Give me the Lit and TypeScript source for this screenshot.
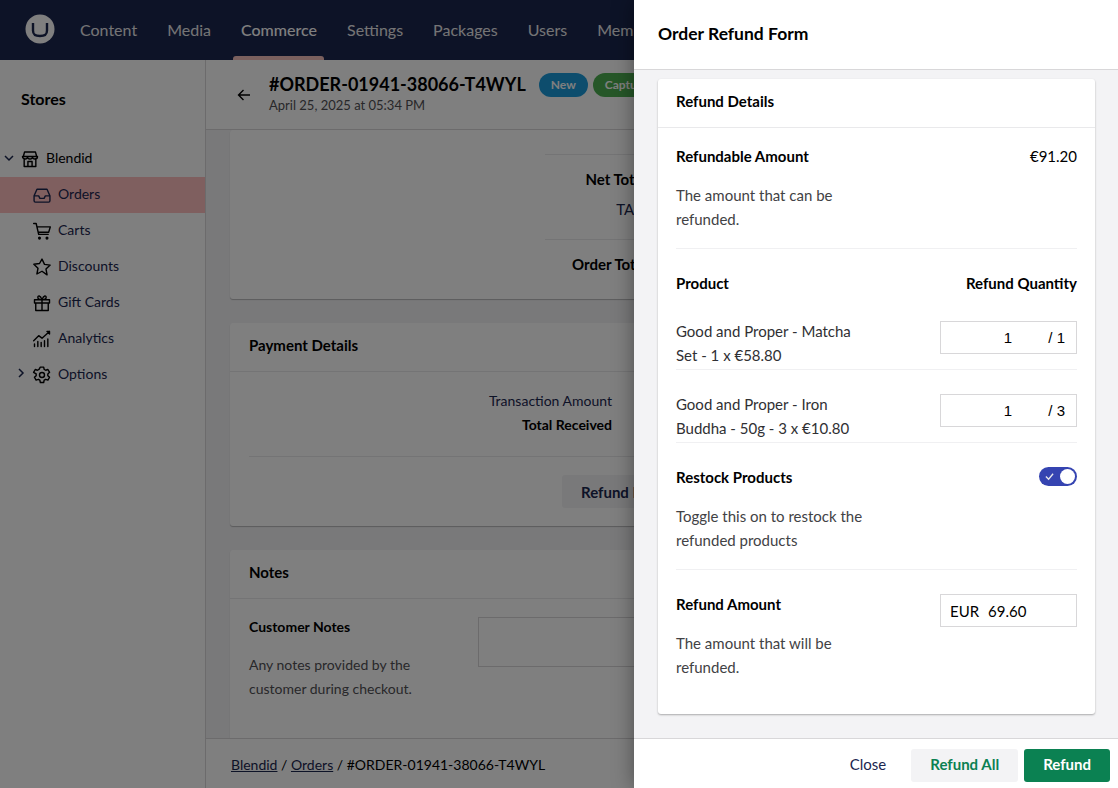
import { LitElement, html, css, svg } from 'lit'
import { customElement } from 'lit/decorators.js'

const nav = ['Content', 'Media', 'Commerce', 'Settings', 'Packages', 'Users', 'Members']

const icons: Record<string, unknown> = {
	store: svg`<path d="M4 9 5.500 3.500h13L20 9M3 9h18a3 3 0 0 1-3 3 3 3 0 0 1-3-1.600A3 3 0 0 1 12 12a3 3 0 0 1-3-1.600A3 3 0 0 1 6 12a3 3 0 0 1-3-3ZM5 12v9h14v-9M9.500 21v-6h5v6"/>`,
	inbox: svg`<path d="M2.500 13 6 5h12l3.500 8v6a1.500 1.500 0 0 1-1.500 1.500H4A1.500 1.500 0 0 1 2.500 19ZM2.500 13H8l1.500 3h5l1.500-3h5.500"/>`,
	cart: svg`<path d="M2 3h3l3 13h11.500M6 7h16l-2 6.500H7.500"/><circle cx="9" cy="20.500" r="1"/><circle cx="18" cy="20.500" r="1"/>`,
	star: svg`<path d="m12 2.500 3 6.300 6.800.9-5 4.800 1.300 6.900L12 17.100 5.900 20.400l1.300-6.900-5-4.800 6.800-.9Z"/>`,
	gift: svg`<path d="M3 8h18v4H3ZM4.500 12v9h15v-9M12 8v13M12 8C9 8 7 6.800 7 5s2.800-3 5 3c2.200-6 5-4.800 5-3s-2 3-5 3Z"/>`,
	chart: svg`<path d="m2 14 6-6 4 3 9-8M18 3h3v3M3 21v-3M7 21v-6M11 21v-5M15 21v-7M19 21v-9"/>`,
	cog: svg`<circle cx="12" cy="12" r="3"/><path d="M10 2.500h4l.6 2.800 1.800 1 2.700-.9 2 3.400-2.100 1.900v2.100l2.100 1.900-2 3.400-2.700-.9-1.800 1-.6 2.800h-4l-.6-2.800-1.800-1-2.700.9-2-3.400 2.100-1.900v-2.100L1.900 8.800l2-3.400 2.700.9 1.800-1Z"/>`,
}

const tree = [
	{ label: 'Orders', icon: 'inbox', active: true },
	{ label: 'Carts', icon: 'cart' },
	{ label: 'Discounts', icon: 'star' },
	{ label: 'Gift Cards', icon: 'gift' },
	{ label: 'Analytics', icon: 'chart' },
	{ label: 'Options', icon: 'cog', caret: true },
]

const icon = (name: string) => html`<svg class="icon" viewBox="0 0 24 24">${icons[name]}</svg>`

@customElement('app-root')
export class AppRoot extends LitElement {
	static styles = css`
		:host {
			display: block;
			width: 1118px;
			height: 788px;
			position: relative;
			overflow: hidden;
			font-family: Lato, "Liberation Sans", sans-serif;
			font-size: 15px;
			line-height: 24px;
			color: #1b264f;
			background: #f3f3f5;
		}

		* {
			box-sizing: border-box;
			margin: 0;
		}

		.topbar {
			height: 60px;
			background: #1b264f;
			display: flex;
			align-items: center;
			padding-left: 25px;
			gap: 30px;
			color: #e9e9eb;
			font-size: 16px;
		}

		.logo {
			width: 30px;
			height: 30px;
			margin-right: -5px;
			margin-top: -3px;
			flex: none;
		}

		.topbar a {
			height: 60px;
			display: flex;
			align-items: center;
			position: relative;
			white-space: nowrap;
		}

		.topbar a.active {
			color: #fff;
			font-weight: 500;
		}

		.topbar a.active::after {
			content: "";
			position: absolute;
			left: -8px;
			right: -7px;
			bottom: 0;
			height: 4px;
			border-radius: 3px 3px 0 0;
			background: #f5c1bc;
		}

		.shell {
			display: flex;
			height: 728px;
		}

		.sidebar {
			width: 206px;
			flex: none;
			background: #fff;
			border-right: 1px solid #d8d7d9;
			padding-top: 27px;
			color: #000;
		}

		.sidebar h3 {
			font-size: 16px;
			font-weight: 700;
			padding-left: 21px;
			line-height: 24px;
			margin-bottom: 30px;
			color: #000;
		}

		.tree-row {
			height: 36px;
			display: flex;
			align-items: center;
			padding: 0 0 2px 32px;
			gap: 6px;
			font-size: 14px;
			position: relative;
			color: #1b264f;
		}

		.tree-row.root {
			padding-left: 20px;
			color: #000;
		}

		.tree-row.active {
			background: #ffbfbf;
		}

		.caret {
			position: absolute;
			width: 10px;
			height: 10px;
			fill: none;
			stroke: #1b264f;
			stroke-width: 1.5;
		}

		.icon {
			width: 20px;
			height: 20px;
			margin-top: 2px;
			flex: none;
			fill: none;
			stroke: #000;
			stroke-width: 1.7;
			stroke-linecap: round;
			stroke-linejoin: round;
		}

		.active .icon {
			stroke: #1b264f;
		}

		.main {
			flex: 1;
			display: flex;
			flex-direction: column;
			min-width: 0;
		}

		.order-head {
			height: 70px;
			flex: none;
			background: #fff;
			border-bottom: 1px solid #d8d7d9;
			display: flex;
			align-items: center;
			padding: 0 0 4px 31px;
			gap: 18px;
		}

		.back {
			width: 14px;
			height: 14px;
			margin-top: 5px;
			fill: none;
			stroke: #000;
			stroke-width: 1.4;
			flex: none;
		}

		.order-title {
			display: flex;
			align-items: center;
			gap: 13px;
			height: 24px;
			white-space: nowrap;
		}

		.order-title strong {
			font-size: 18px;
			font-weight: 700;
			color: #000;
		}

		.order-date {
			font-size: 13px;
			line-height: 18px;
			color: #515054;
		}

		.badges {
			display: flex;
			gap: 5px;
			margin-top: 2px;
		}

		.badge {
			height: 24px;
			border-radius: 12px;
			padding: 0 12px;
			color: #fff;
			font-size: 12px;
			font-weight: 700;
			line-height: 24px;
			background: #1b9bdb;
		}

		.badge.green {
			background: #4caf50;
		}

		.scroll {
			flex: 1;
			min-height: 0;
			overflow: hidden;
			padding: 0 24px;
			display: flex;
			flex-direction: column;
			gap: 24px;
		}

		.card {
			width: 860px;
			flex: none;
			background: #fff;
			border-radius: 3px;
			box-shadow: 0 1px 1px rgba(0, 0, 0, 0.25);
		}

		.totals {
			height: 169px;
			padding-top: 24px;
			display: flex;
			flex-direction: column;
			align-items: flex-start;
			padding-left: 315px;
		}

		.totals hr,
		.pay hr {
			border: 0;
			border-top: 1px solid #e9e9eb;
		}

		.totals hr {
			width: 400px;
		}

		.sum {
			width: 102px;
			text-align: right;
			white-space: nowrap;
		}

		.sum.bold {
			font-weight: 700;
			color: #000;
		}

		.sum.net {
			width: 101px;
			margin-top: 12px;
		}

		.sum.tax {
			width: 99px;
			margin-top: 6px;
		}

		.totals hr.second {
			margin-top: 18px;
		}

		.sum.order {
			margin-top: 12px;
		}

		.card-head {
			height: 49px;
			border-bottom: 1px solid #e9e9eb;
			padding: 0 19px 5px;
			display: flex;
			align-items: center;
			font-weight: 700;
			color: #000;
		}

		.pay {
			height: 203px;
		}

		.pay .rows {
			padding-top: 17px;
			margin-left: 19px;
			width: 363px;
			text-align: right;
			height: 84px;
			font-size: 14px;
		}

		.pay .rows strong {
			display: block;
			color: #000;
		}

		.pay hr {
			margin-left: 19px;
		}

		.pay .btn-wrap {
			padding: 18px 0 0 332px;
		}

		.ghost {
			display: inline-flex;
			align-items: center;
			height: 33px;
			padding: 0 19px;
			width: 150px;
			border-radius: 3px;
			background: #f3f3f5;
			font-weight: 700;
			white-space: nowrap;
		}

		.notes {
			height: 200px;
		}

		.note-body {
			display: flex;
			padding: 18px 19px;
		}

		.note-copy {
			width: 229px;
			flex: none;
			margin-top: -2px;
			font-size: 14px;
		}

		.note-copy strong {
			display: block;
			color: #000;
			margin-bottom: 14px;
		}

		.note-copy p {
			color: #515054;
			width: 200px;
		}

		.note-box {
			width: 400px;
			height: 50px;
			border: 1px solid #d8d7d9;
		}

		.crumbs {
			height: 50px;
			flex: none;
			background: #fff;
			border-top: 1px solid #d8d7d9;
			padding: 2px 0 0 25px;
			display: flex;
			align-items: center;
			white-space: pre;
			font-size: 14px;
			color: #000;
		}

		.crumbs a {
			color: #1b264f;
			text-decoration: underline;
		}

		.backdrop {
			position: absolute;
			inset: 0;
			background: rgba(0, 0, 0, 0.5);
		}

		.panel {
			position: absolute;
			top: 0;
			right: 0;
			bottom: 0;
			width: 484px;
			background: #f3f3f5;
			box-shadow: 0 0 20px rgba(0, 0, 0, 0.4);
			display: flex;
			flex-direction: column;
		}

		.panel-head {
			height: 70px;
			flex: none;
			background: #fff;
			border-bottom: 1px solid #d8d7d9;
			display: flex;
			align-items: center;
			padding: 0 24px 2px;
			font-size: 17.500px;
			font-weight: 700;
			color: #000;
		}

		.panel-body {
			flex: 1;
			padding: 9px 23px 24px 24px;
			min-height: 0;
		}

		.refund {
			width: 437px;
			height: 635px;
			box-shadow: 0 1px 2px rgba(0, 0, 0, 0.3);
		}

		.refund .card-head {
			padding-left: 18px;
		}

		.refund .content {
			padding: 16px 18px 0;
		}

		.line {
			display: flex;
			justify-content: space-between;
			align-items: flex-start;
		}

		.label {
			font-weight: 700;
			color: #000;
		}

		.hint {
			color: #424245;
			width: 200px;
			margin-top: 15px;
		}

		.value {
			color: #000;
		}

		.block {
			padding-bottom: 17px;
			border-bottom: 1px solid #f0f0f2;
		}

		.table-head {
			margin-top: 22px;
		}

		.product {
			display: flex;
			justify-content: space-between;
			border-bottom: 1px solid #f0f0f2;
		}

		.product.first {
			height: 75px;
			padding-top: 24px;
		}

		.product.next {
			height: 73px;
			padding-top: 22px;
		}

		.product-name {
			width: 190px;
			color: #303033;
		}

		.qty {
			width: 137px;
			height: 33px;
			margin-top: 2px;
			border: 1px solid #d8d7d9;
			display: flex;
			align-items: center;
			font-family: "Liberation Sans", sans-serif;
			font-size: 15px;
			color: #000;
		}

		.qty b {
			font-weight: 400;
			width: 71px;
			text-align: right;
		}

		.qty span {
			margin-left: auto;
			margin-right: 11px;
		}

		.toggle {
			width: 38px;
			height: 19px;
			margin-top: 2px;
			border-radius: 10px;
			background: #3544b1;
			display: flex;
			align-items: center;
			justify-content: space-between;
			padding: 0 2px 0 6px;
			flex: none;
		}

		.toggle i {
			width: 15px;
			height: 15px;
			border-radius: 50%;
			background: #fff;
		}

		.toggle svg {
			width: 9px;
			height: 9px;
			fill: none;
			stroke: #e9e9eb;
			stroke-width: 1.5;
		}

		.restock,
		.amount {
			padding-top: 22px;
		}

		.eur {
			width: 137px;
			height: 33px;
			margin-top: 2px;
			border: 1px solid #d8d7d9;
			padding-left: 9px;
			display: flex;
			align-items: center;
			gap: 9px;
			color: #000;
		}

		.amount .hint {
			margin-top: 4px;
		}

		.panel-foot {
			height: 50px;
			flex: none;
			background: #fff;
			border-top: 1px solid #d8d7d9;
			display: flex;
			align-items: center;
			justify-content: flex-end;
			gap: 6px;
			padding: 3px 8px 0 0;
			font-weight: 700;
		}

		.btn {
			height: 33px;
			display: flex;
			align-items: center;
			padding: 0 19px 2px;
			border-radius: 3px;
		}

		.btn.close {
			font-weight: 400;
			padding: 0 19px 2px 0;
		}

		.btn.alt {
			background: #f3f3f5;
			color: #0b8152;
		}

		.btn.go {
			background: #0b8152;
			color: #fff;
		}
	`

	render() {
		return html`
			<div class="topbar">
				<svg class="logo" viewBox="0 0 30 30">
					<circle cx="15" cy="15" r="14.500" fill="#fff" />
					<path d="M8 9v7.500c0 4 2 5.500 7 5.500s7-1.500 7-5.500V9" fill="none" stroke="#1b264f" stroke-width="2.400" />
				</svg>
				${nav.map((n) => html`<a class=${n === 'Commerce' ? 'active' : ''}>${n}</a>`)}
			</div>

			<div class="shell">
				<aside class="sidebar">
					<h3>Stores</h3>
					<div class="tree-row root">
						<svg class="caret" style="left:4px" viewBox="0 0 10 10"><path d="m1 3 4 4 4-4" /></svg>
						${icon('store')}Blendid
					</div>
					${tree.map(
						(t) => html`<div class="tree-row ${t.active ? 'active' : ''}">
							${t.caret ? html`<svg class="caret" style="left:16px;top:11px" viewBox="0 0 10 10"><path d="m3 1 4 4-4 4" /></svg>` : ''}
							${icon(t.icon)}${t.label}
						</div>`
					)}
				</aside>

				<div class="main">
					<div class="order-head">
						<svg class="back" viewBox="0 0 14 14"><path d="M13 7H1.500M6.500 2 1.500 7l5 5" /></svg>
						<div>
							<div class="order-title">
								<strong>#ORDER-01941-38066-T4WYL</strong>
								<div class="badges">
									<span class="badge">New</span>
									<span class="badge green">Captured</span>
								</div>
							</div>
							<div class="order-date">April 25, 2025 at 05:34 PM</div>
						</div>
					</div>

					<div class="scroll">
						<div class="card totals">
							<hr />
							<div class="sum bold net">Net Total</div>
							<div class="sum tax">TAX</div>
							<hr class="second" />
							<div class="sum bold order">Order Total</div>
						</div>

						<div class="card pay">
							<div class="card-head">Payment Details</div>
							<div class="rows">
								<div>Transaction Amount</div>
								<strong>Total Received</strong>
							</div>
							<hr />
							<div class="btn-wrap"><span class="ghost">Refund Payment</span></div>
						</div>

						<div class="card notes">
							<div class="card-head">Notes</div>
							<div class="note-body">
								<div class="note-copy">
									<strong>Customer Notes</strong>
									<p>Any notes provided by the customer during checkout.</p>
								</div>
								<div class="note-box"></div>
							</div>
						</div>
					</div>

					<div class="crumbs"><a>Blendid</a> / <a>Orders</a> / #ORDER-01941-38066-T4WYL</div>
				</div>
			</div>

			<div class="backdrop"></div>

			<section class="panel">
				<div class="panel-head">Order Refund Form</div>
				<div class="panel-body">
					<div class="card refund">
						<div class="card-head">Refund Details</div>
						<div class="content">
							<div class="block">
								<div class="line"><span class="label">Refundable Amount</span><span class="value">€91.20</span></div>
								<p class="hint">The amount that can be refunded.</p>
							</div>

							<div class="line table-head"><span class="label">Product</span><span class="label">Refund Quantity</span></div>

							<div class="product first">
								<div class="product-name">Good and Proper - Matcha Set - 1 x €58.80</div>
								<div class="qty"><b>1</b><span>/ 1</span></div>
							</div>
							<div class="product next">
								<div class="product-name">Good and Proper - Iron Buddha - 50g - 3 x €10.80</div>
								<div class="qty"><b>1</b><span>/ 3</span></div>
							</div>

							<div class="block restock">
								<div class="line">
									<span class="label">Restock Products</span>
									<span class="toggle">
										<svg viewBox="0 0 10 10"><path d="m1 5 3 3 5-6" /></svg><i></i>
									</span>
								</div>
								<p class="hint">Toggle this on to restock the refunded products</p>
							</div>

							<div class="amount">
								<div class="line">
									<span class="label">Refund Amount</span>
									<div class="eur"><span>EUR</span><span>69.60</span></div>
								</div>
								<p class="hint">The amount that will be refunded.</p>
							</div>
						</div>
					</div>
				</div>
				<div class="panel-foot">
					<span class="btn close">Close</span>
					<span class="btn alt">Refund All</span>
					<span class="btn go">Refund</span>
				</div>
			</section>
		`
	}
}
